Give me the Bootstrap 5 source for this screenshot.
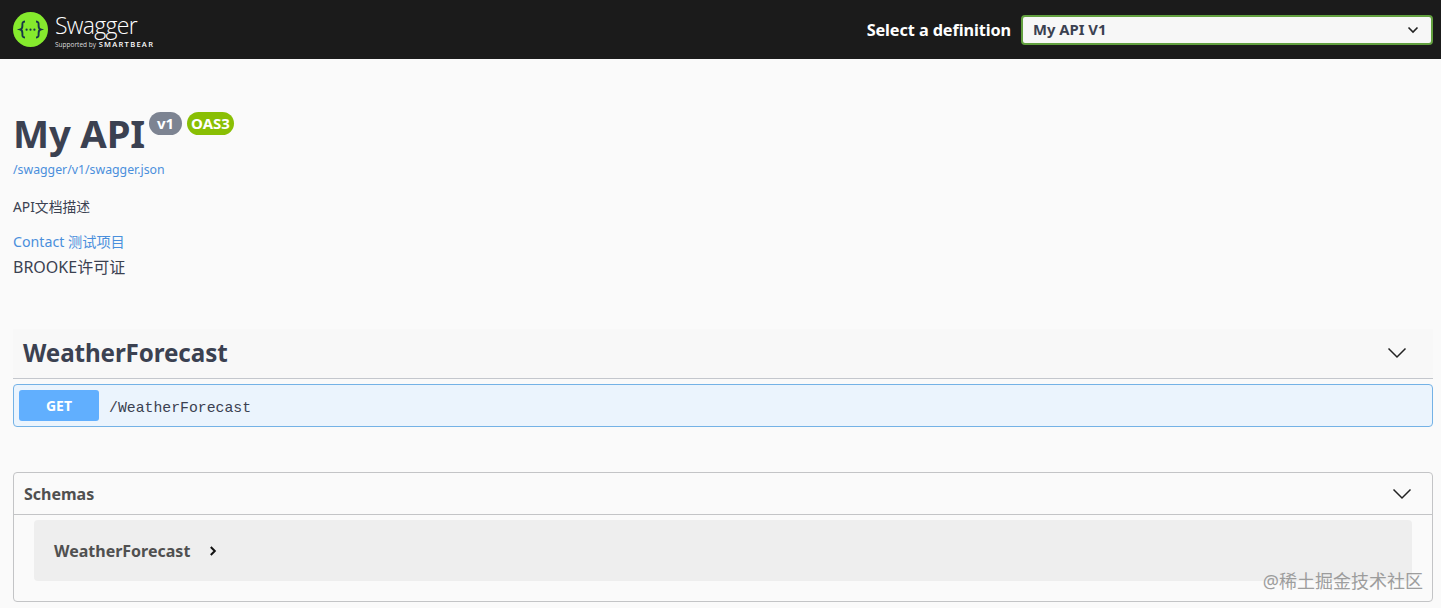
<!DOCTYPE html>
<html lang="zh">
<head>
<meta charset="utf-8">
<title>Swagger UI</title>
<link href="https://cdn.jsdelivr.net/npm/bootstrap@5.3.0/dist/css/bootstrap.min.css" rel="stylesheet">
<style>
html,body{height:608px;overflow:hidden}
body{background:#fafafa;color:#3b4151;font-family:"Noto Sans","Noto Sans CJK SC",sans-serif;position:relative}
.sw-top{height:59px;background:#1b1b1b;padding:0 8px 0 13px}
.sw-logo{gap:7px}
.sw-brand{color:#fff;line-height:1;font-family:"Open Sans",sans-serif;margin-top:2px}
.sw-name{font-size:23px;letter-spacing:-.7px;line-height:24px;font-weight:300;display:block}
.sw-sup{font-size:6.500px;line-height:9px;display:block;margin-top:3px;white-space:nowrap;color:#ddd}
.sw-sup b{font-size:7.500px;letter-spacing:1.300px;font-weight:600;color:#fff;margin-left:1px}
.sw-label{color:#fff;font-weight:700;font-size:16.300px;margin:2px 10px 0 0;letter-spacing:-.1px}
.sw-select{width:412px;height:30px;border:2px solid #62a03f;border-radius:4px;background:#f7f7f7;color:#3b4151;font-weight:700;font-size:14.800px;padding:0 12px 0 10px}
.sw-info{padding:0 13px;margin-top:50px}
.sw-title{font-size:38.300px;font-weight:700;line-height:48px;margin:0;color:#3b4151;letter-spacing:-.2px}
.sw-pill{font-size:15px;font-weight:700;color:#fff;border-radius:57px;line-height:23px;height:23px;margin-top:3px}
.sw-v{background:#7d8492;margin-left:4px;padding:0 8px}
.sw-oas{background:#89bf04;margin-left:5px;padding:0 4px}
.sw-url{font-size:12.300px;color:#4a8fdc;line-height:16px;text-decoration:none;display:block;margin-top:5px}
.sw-desc{font-size:13.800px;line-height:18px;margin:20px 0 0;color:#3b4151}
.sw-contact{font-size:14.200px;line-height:20px;color:#4a8fdc;text-decoration:none;display:block;margin-top:16px}
.sw-lic{font-size:16px;line-height:22px;margin-top:4px;color:#3b4151}
.sw-body{padding:0 8px 0 13px}
.sw-tag{height:50px;margin-top:51px;padding:0 26px 2px 10px;background:#f8f8f8;border-bottom:1px solid #c4c7cd}
.sw-tag h3{font-size:24.200px;font-weight:700;margin:0;color:#3b4151;letter-spacing:-.1px}
.sw-op{height:43px;margin-top:5px;background:#ebf4fd;border:1px solid #74b2e6;border-radius:4px;padding:0 5px}
.sw-get{width:80px;height:31px;background:#61affe;color:#fff;font-weight:700;font-size:14px;border-radius:3px}
.sw-path{font-family:"Liberation Mono",monospace;font-size:14.800px;color:#3b4151;margin:6px 0 0 10px;font-weight:400}
.sw-schemas{margin-top:45px;height:130px;border:1px solid #c3c4c6;border-radius:4px}
.sw-shead{height:42px;border-bottom:1px solid #c3c4c6;padding:0 20px 0 10px}
.sw-shead h4{font-size:16px;font-weight:700;margin:2px 0 0;color:#505050}
.sw-model{height:61px;margin:5px 20px 0;background:#eee;border-radius:4px;padding:0 20px}
.sw-mname{font-size:16px;font-weight:700;color:#505050;margin-right:19px}
.sw-mark{position:absolute;right:18px;bottom:18px;font-size:18px;line-height:1;color:#8e8e8e;opacity:.85}
svg{display:block;flex:none}
</style>
</head>
<body>
<header class="sw-top d-flex align-items-center justify-content-between">
  <div class="sw-logo d-flex align-items-center">
    <svg width="35" height="35" viewBox="0 0 35 35"><circle cx="17.500" cy="17.500" r="17.500" fill="#85ea2d"/><path d="M12 9.500c-3 0-2.600 2.200-2.600 4.300 0 2.100-.6 3.300-2 3.700 1.400.4 2 1.600 2 3.700 0 2.100-.4 4.300 2.600 4.300M23 9.500c3 0 2.600 2.200 2.600 4.300 0 2.100.6 3.300 2 3.700-1.400.4-2 1.600-2 3.700 0 2.100.4 4.300-2.600 4.300" fill="none" stroke="#173647" stroke-width="1.900"/><circle cx="13.600" cy="17.700" r="1.100" fill="#173647"/><circle cx="17.500" cy="17.700" r="1.100" fill="#173647"/><circle cx="21.400" cy="17.700" r="1.100" fill="#173647"/></svg>
    <div class="sw-brand"><span class="sw-name">Swagger</span><span class="sw-sup">Supported by <b>SMARTBEAR</b></span></div>
  </div>
  <div class="d-flex align-items-center">
    <span class="sw-label">Select a definition</span>
    <div class="sw-select d-flex align-items-center justify-content-between"><span>My API V1</span>
      <svg width="12" height="8" viewBox="0 0 12 8"><path d="M1.500 1.500 6 6l4.500-4.500" fill="none" stroke="#222" stroke-width="1.600"/></svg></div>
  </div>
</header>
<section class="sw-info">
  <div class="d-flex align-items-start">
    <h2 class="sw-title">My API</h2>
    <span class="sw-pill sw-v">v1</span><span class="sw-pill sw-oas">OAS3</span>
  </div>
  <a class="sw-url" href="#">/swagger/v1/swagger.json</a>
  <p class="sw-desc">API文档描述</p>
  <a class="sw-contact" href="#">Contact 测试项目</a>
  <div class="sw-lic">BROOKE许可证</div>
</section>
<main class="sw-body">
  <div class="sw-tag d-flex align-items-center justify-content-between">
    <h3>WeatherForecast</h3>
    <svg width="20" height="12" viewBox="0 0 20 12"><path d="M1.500 1.500 10 10l8.500-8.500" fill="none" stroke="#222" stroke-width="1.500"/></svg>
  </div>
  <div class="sw-op d-flex align-items-center">
    <span class="sw-get d-flex align-items-center justify-content-center">GET</span>
    <span class="sw-path">/WeatherForecast</span>
  </div>
  <div class="sw-schemas">
    <div class="sw-shead d-flex align-items-center justify-content-between">
      <h4>Schemas</h4>
      <svg width="20" height="12" viewBox="0 0 20 12"><path d="M1.500 1.500 10 10l8.500-8.500" fill="none" stroke="#222" stroke-width="1.500"/></svg>
    </div>
    <div class="sw-model d-flex align-items-center">
      <span class="sw-mname">WeatherForecast</span>
      <svg width="8" height="10" viewBox="0 0 8 10"><path d="M1.800 1 5.800 5l-4 4" fill="none" stroke="#111" stroke-width="2"/></svg>
    </div>
  </div>
</main>
<div class="sw-mark">@稀土掘金技术社区</div>
<script src="https://cdn.jsdelivr.net/npm/bootstrap@5.3.0/dist/js/bootstrap.bundle.min.js"></script>
</body>
</html>
